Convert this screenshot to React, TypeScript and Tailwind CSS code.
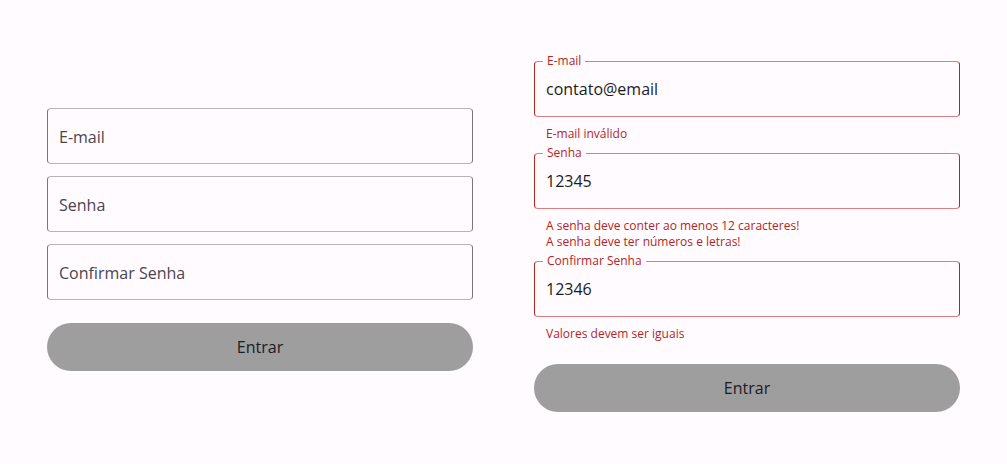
import React from "react";

function PlainField({ placeholder }: { placeholder: string }) {
  return (
    <div className="h-14 rounded-[4px] border border-[#bcb3b3] border-x-[#79747e] flex items-center pl-[11px] pt-[2px]">
      <span className="text-[16px] text-[#49454f]">{placeholder}</span>
    </div>
  );
}

function ErrorField({ label, value, errors }: { label: string; value: string; errors: string[] }) {
  return (
    <div className="flex flex-col">
      <div className="relative h-14 rounded-[4px] border border-[#dc7f80] border-x-[#b3261e] flex items-center pl-[11px]">
        <span className="absolute -top-[9px] left-[8px] px-1 bg-[#fffbfe] text-[12px] leading-4 text-[#b3261e]">
          {label}
        </span>
        <span className="text-[16px] text-[#1c1b1f]">{value}</span>
      </div>
      <div className="pt-[9px] pl-3">
        {errors.map((e) => (
          <p key={e} className="text-[12px] leading-4 text-[#b3261e]">{e}</p>
        ))}
      </div>
    </div>
  );
}

function Button() {
  return (
    <button className="h-12 w-full rounded-full bg-[#9e9e9e] text-[16px] text-[#1c1b1f]">Entrar</button>
  );
}

export default function App() {
  return (
    <div
      className="w-[1007px] h-[464px] bg-[#fffbfe] flex gap-[61px] px-[47px]"
      style={{ fontFamily: '"Open Sans", "Noto Sans", sans-serif' }}
    >
      <div className="flex-1 flex flex-col pt-[108px]">
        <div className="flex flex-col gap-3">
          <PlainField placeholder="E-mail" />
          <PlainField placeholder="Senha" />
          <PlainField placeholder="Confirmar Senha" />
        </div>
        <div className="mt-[23px]">
          <Button />
        </div>
      </div>
      <div className="flex-1 flex flex-col pt-[61px]">
        <div className="flex flex-col gap-[11px]">
          <ErrorField label="E-mail" value="contato@email" errors={["E-mail inválido"]} />
          <ErrorField
            label="Senha"
            value="12345"
            errors={["A senha deve conter ao menos 12 caracteres!", "A senha deve ter números e letras!"]}
          />
          <ErrorField label="Confirmar Senha" value="12346" errors={["Valores devem ser iguais"]} />
        </div>
        <div className="mt-[22px]">
          <Button />
        </div>
      </div>
    </div>
  );
}
